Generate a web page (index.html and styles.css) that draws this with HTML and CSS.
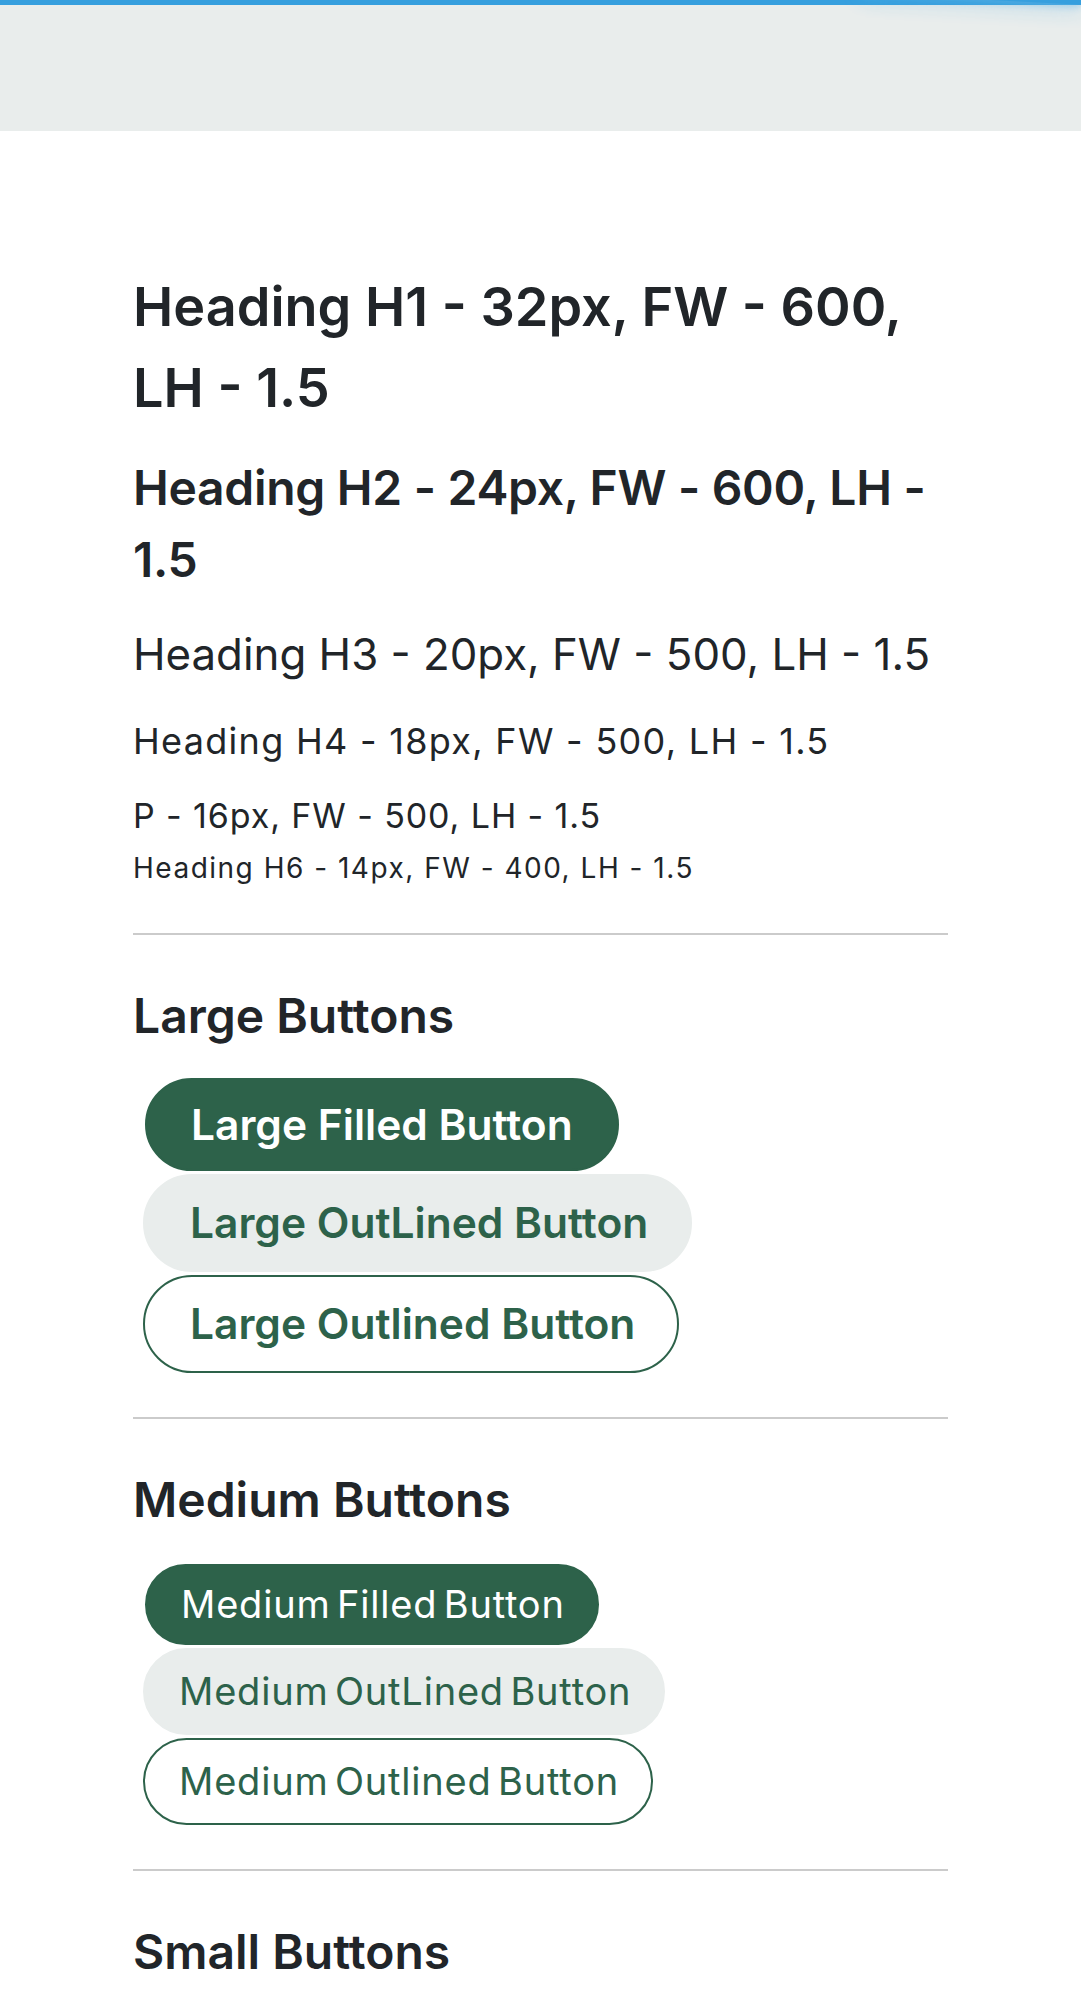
FILE: index.html
```html
<!DOCTYPE html>
<html lang="en">
<head>
<meta charset="utf-8">
<title>Typography &amp; Buttons</title>
<link rel="stylesheet" href="styles.css">
</head>
<body>
<div class="progress"><div class="peg"></div></div>
<header class="topbar"></header>
<main class="page">
  <section class="type">
    <h1 class="h1">Heading H1 - 32px, FW - 600, LH - 1.5</h1>
    <h2 class="h2">Heading H2 - 24px, FW - 600, LH - 1.5</h2>
    <h3 class="h3">Heading H3 - 20px, FW - 500, LH - 1.5</h3>
    <h4 class="h4">Heading H4 - 18px, FW - 500, LH - 1.5</h4>
    <p class="para">P - 16px, FW - 500, LH - 1.5</p>
    <h6 class="h6">Heading H6 - 14px, FW - 400, LH - 1.5</h6>
  </section>
  <hr class="divider">
  <section class="group">
    <h2 class="group-title">Large Buttons</h2>
    <div class="btn-stack">
      <button class="btn btn-lg btn-filled">Large Filled Button</button>
      <button class="btn btn-lg btn-tonal">Large OutLined Button</button>
      <button class="btn btn-lg btn-outline">Large Outlined Button</button>
    </div>
  </section>
  <hr class="divider">
  <section class="group">
    <h2 class="group-title">Medium Buttons</h2>
    <div class="btn-stack btn-stack-md">
      <button class="btn btn-md btn-filled">Medium Filled Button</button>
      <button class="btn btn-md btn-tonal">Medium OutLined Button</button>
      <button class="btn btn-md btn-outline">Medium Outlined Button</button>
    </div>
  </section>
  <hr class="divider">
  <section class="group">
    <h2 class="group-title">Small Buttons</h2>
  </section>
</main>
</body>
</html>
```
FILE: styles.css
```css
html, body {
  margin: 0;
  padding: 0;
  background: #ffffff;
}
body {
  font-family: Inter, "Noto Sans", "Liberation Sans", sans-serif;
  color: #212529;
  overflow: hidden;
}
.progress {
  position: fixed;
  top: 0;
  left: 0;
  right: 0;
  height: 5px;
  background: #369fde;
  z-index: 10;
}
.peg {
  position: absolute;
  right: 0;
  top: 0;
  width: 220px;
  height: 100%;
  box-shadow: 0 0 22px #4aa8e0, 0 0 8px #6bb8e6;
  opacity: 0.9;
  transform: rotate(3deg) translate(0, -6px);
}
.topbar {
  height: 131px;
  background: #e9edec;
}
.page {
  width: 815px;
  margin-left: 133px;
  padding-top: 135px;
}
.type h1, .type h2, .type h3, .type h4, .type h6, .type p {
  margin: 0;
}
.h1 {
  font-size: 54px;
  font-weight: 600;
  line-height: 1.5;
}
.h2 {
  font-size: 48px;
  font-weight: 600;
  line-height: 1.5;
  letter-spacing: -0.3px;
  margin-top: 24px !important;
}
.h3 {
  font-size: 43.8px;
  font-weight: 400;
  line-height: 1.5;
  margin-top: 26px !important;
}
.h4 {
  font-size: 36px;
  font-weight: 400;
  line-height: 1.5;
  letter-spacing: 1.3px;
  margin-top: 26px !important;
}
.para {
  font-size: 34px;
  font-weight: 400;
  line-height: 1.5;
  letter-spacing: 0.9px;
  margin-top: 22px !important;
}
.h6 {
  font-size: 28px;
  font-weight: 400;
  line-height: 1.5;
  letter-spacing: 1.5px;
  margin-top: 6px !important;
}
.divider {
  border: 0;
  height: 2px;
  background: #cbcbcb;
  margin: 44px 0 45px;
}
.group-title {
  margin: 0;
  font-size: 48px;
  font-weight: 600;
  line-height: 1.5;
}
.btn-stack {
  display: flex;
  flex-direction: column;
  align-items: flex-start;
  gap: 3px;
  margin-top: 26px;
  padding-left: 10px;
}
.btn-stack-md {
  margin-top: 28px;
}
.btn {
  font-family: inherit;
  border-radius: 999px;
  border: 2px solid transparent;
  cursor: pointer;
  color: #2d624a;
  background: transparent;
  line-height: 1.5;
}
.btn-lg {
  font-size: 42.5px;
  font-weight: 600;
  padding: 13px 44px;
}
.btn-lg.btn-tonal,
.btn-lg.btn-outline {
  padding: 15px 42px 15px 45px;
}
.btn-md {
  font-size: 38px;
  font-weight: 400;
  letter-spacing: 0.8px;
  word-spacing: -5px;
  padding: 10px 32px 10px 34px;
}
.btn-md.btn-tonal,
.btn-md.btn-outline {
  padding: 13px 32px 13px 34px;
}
.btn-filled {
  background: #2d624a;
  border-color: #2d624a;
  color: #ffffff;
  margin-left: 2px;
}
.btn-tonal {
  background: #e9edec;
  border-color: #e9edec;
}
.btn-outline {
  border-color: #2d624a;
  background: #ffffff;
}
```
